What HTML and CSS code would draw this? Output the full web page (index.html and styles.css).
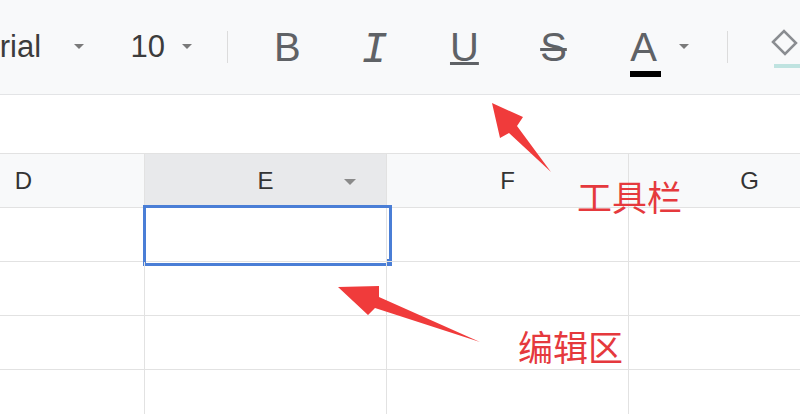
FILE: index.html
```html
<!DOCTYPE html>
<html lang="zh-CN">
<head>
    <meta charset="UTF-8">
    <meta name="viewport" content="width=device-width, initial-scale=1.0">
    <title>表格 工具栏与编辑区</title>
    <link rel="stylesheet" href="styles.css">
</head>
<body>
    <div class="page">
        <div class="toolbar">
            <span class="font-name">Arial</span>
            <span class="caret"></span>
            <span class="font-size">10</span>
            <span class="caret caret-size"></span>
            <span class="divider divider-first"></span>
            <span class="tool tool-bold">B</span>
            <span class="tool tool-italic">I</span>
            <span class="tool tool-underline">U</span>
            <span class="tool tool-strike">S</span>
            <span class="tool tool-color">A<span class="color-bar"></span></span>
            <span class="caret caret-color"></span>
            <span class="divider divider-second"></span>
            <span class="tool tool-fill">
                <svg width="30" height="42" viewBox="0 0 30 42">
                    <path d="M3 16 L14 5 L26 17 L15 28 Z" fill="none" stroke="#8a8d91" stroke-width="2.5"/>
                    <rect x="4" y="38" width="26" height="4" fill="#bfe3e0"/>
                </svg>
            </span>
        </div>

        <div class="formula-bar"></div>

        <div class="sheet">
            <div class="row header-row">
                <div class="cell">D</div>
                <div class="cell active-col">E<span class="col-menu"></span></div>
                <div class="cell">F</div>
                <div class="cell">G</div>
            </div>
            <div class="row">
                <div class="cell"></div>
                <div class="cell selected"><span class="selection"><span class="handle"></span></span></div>
                <div class="cell"></div>
                <div class="cell"></div>
            </div>
            <div class="row">
                <div class="cell"></div>
                <div class="cell"></div>
                <div class="cell"></div>
                <div class="cell"></div>
            </div>
            <div class="row">
                <div class="cell"></div>
                <div class="cell"></div>
                <div class="cell"></div>
                <div class="cell"></div>
            </div>
            <div class="row">
                <div class="cell"></div>
                <div class="cell"></div>
                <div class="cell"></div>
                <div class="cell"></div>
            </div>
        </div>

        <!-- annotation arrows over the sheet -->
        <svg class="arrows" width="800" height="414" viewBox="0 0 800 414">
            <polygon points="492,103 523,117 517,126 551,172 509,133 500,138" fill="#f03b3b"/>
            <polygon points="338,287 379,286 379,297 480,342 375,308 368,315" fill="#f03b3b"/>
        </svg>
        <span class="label label-toolbar">工具栏</span>
        <span class="label label-editor">编辑区</span>
    </div>
</body>
</html>
```

FILE: styles.css
```css
body {
    margin: 0;
    padding: 0;
    background-color: #ffffff;
    font-family: "Liberation Sans", Arial, sans-serif;
    overflow: hidden;
}
.page {
    position: relative;
    width: 800px;
    height: 414px;
    overflow: hidden;
}

/* toolbar */
.toolbar {
    display: flex;
    align-items: center;
    height: 94px;
    margin-left: -21px;
    background-color: #f8f9fa;
    border-bottom: 1px solid #e3e4e6;
    color: #444;
}
.font-name {
    width: 103px;
    font-size: 31px;
    color: #3c3c3c;
}
.font-size {
    margin-left: 46px;
    width: 35px;
    font-size: 31px;
    color: #3c3c3c;
}
.caret {
    width: 0;
    height: 0;
    border-left: 5px solid transparent;
    border-right: 5px solid transparent;
    border-top: 5px solid #7a7a7a;
    margin-top: -2px;
}
.caret-size {
    margin-left: 17px;
}
.caret-color {
    margin-left: 17px;
}
.divider {
    width: 1px;
    height: 32px;
    background-color: #dcdcdc;
}
.divider-first {
    margin-left: 35px;
}
.divider-second {
    margin-left: 38px;
}
.tool {
    position: relative;
    width: 40px;
    text-align: center;
    font-size: 40px;
    line-height: 44px;
    color: #5f6266;
}
.tool-bold {
    margin-left: 41px;
}
.tool-italic {
    margin-left: 50px;
    padding-top: 6px;
    font-family: "Liberation Mono", monospace;
    font-style: italic;
    font-size: 44px;
}
.tool-underline {
    margin-left: 53px;
    text-decoration: underline;
    text-decoration-thickness: 3px;
    text-underline-offset: 1px;
}
.tool-strike {
    margin-left: 52px;
    text-decoration: line-through;
    text-decoration-thickness: 3px;
}
.tool-color {
    margin-left: 53px;
}
.color-bar {
    position: absolute;
    left: 5px;
    bottom: -8px;
    width: 31px;
    height: 6px;
    background-color: #000;
}
.tool-fill {
    margin-left: 42px;
    width: 30px;
    line-height: 0;
}

/* formula area */
.formula-bar {
    height: 58px;
    border-bottom: 1px solid #e2e2e2;
}

/* sheet grid */
.sheet {
    margin-left: -97px;
}
.row {
    display: flex;
}
.cell {
    position: relative;
    width: 241px;
    height: 53px;
    flex-shrink: 0;
    border-right: 1px solid #e2e2e2;
    border-bottom: 1px solid #e2e2e2;
}
.header-row .cell {
    display: flex;
    align-items: center;
    justify-content: center;
    background-color: #f8f9fa;
    font-size: 24px;
    color: #333;
}
.header-row .active-col {
    background-color: #e8e9eb;
}
.col-menu {
    position: absolute;
    right: 30px;
    top: 25px;
    border-left: 6px solid transparent;
    border-right: 6px solid transparent;
    border-top: 6px solid #8a8a8a;
}
.selection {
    position: absolute;
    left: -2px;
    top: -3px;
    width: 249px;
    height: 61px;
    box-sizing: border-box;
    border: 3px solid #4a7ed6;
}
.handle {
    position: absolute;
    right: -3px;
    bottom: -3px;
    width: 5px;
    height: 7px;
    background-color: #4a7ed6;
}

/* annotations */
.arrows {
    position: absolute;
    left: 0;
    top: 0;
    pointer-events: none;
}
.label {
    position: absolute;
    font-family: "Noto Sans CJK SC", sans-serif;
    font-size: 35px;
    line-height: 1;
    color: #e5393d;
}
.label-toolbar {
    left: 577px;
    top: 178px;
}
.label-editor {
    left: 518px;
    top: 328px;
}
```
